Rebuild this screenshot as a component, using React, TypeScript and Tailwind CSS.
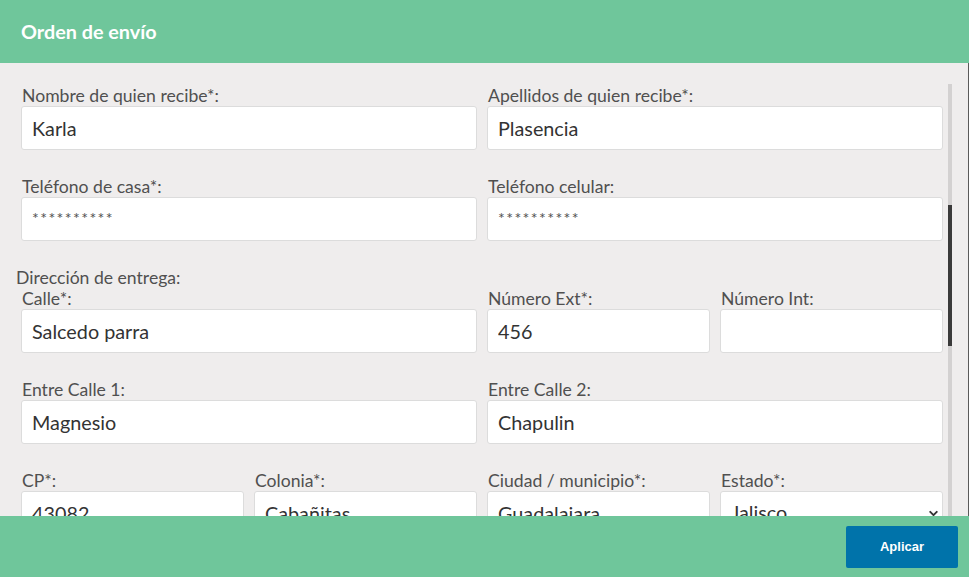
import { ChevronDown } from 'lucide-react';

interface FieldProps {
  label: string;
  value?: string;
  masked?: boolean;
  select?: boolean;
}

function Field({ label, value = '', masked, select }: FieldProps) {
  return (
    <div className="mb-[27px] min-w-0">
      <div className="h-[20px] pl-[1px] text-[17.6px] leading-[20px] text-[#505050] whitespace-nowrap">{label}</div>
      {select ? (
        <div className="flex h-[44px] items-center justify-between rounded-[3px] border border-[#dcdcdc] bg-white pl-[10px] pr-[2px] text-[19.8px] text-[#333]">
          <span>{value}</span>
          <ChevronDown className="h-[13px] w-[13px] text-[#333]" strokeWidth={3.5} />
        </div>
      ) : (
        <input
          readOnly
          defaultValue={value}
          className={
            'block h-[44px] w-full rounded-[3px] border border-[#dcdcdc] bg-white px-[10px] outline-none ' +
            (masked ? 'pb-[4px] text-[16px] tracking-[1.4px] text-[#505050]' : 'text-[19.8px] text-[#333]')
          }
        />
      )}
    </div>
  );
}

export default function App() {
  return (
    <div className="flex h-[577px] w-full flex-col overflow-hidden bg-[#efeded] font-['Lato',sans-serif]">
      {/* Header */}
      <div className="flex h-[63px] shrink-0 items-center bg-[#6fc69b] px-[21px]">
        <h1 className="text-[19.8px] font-bold text-white">Orden de envío</h1>
      </div>

      {/* Body */}
      <div className="flex min-h-0 flex-1 overflow-hidden border-r border-[#5a5a5a]">
        <div className="w-[943px] shrink-0 pl-[21px] pt-[23px]">
          <div className="grid grid-cols-2 gap-x-[10px]">
            <Field label="Nombre de quien recibe*:" value="Karla" />
            <Field label="Apellidos de quien recibe*:" value="Plasencia" />
            <Field label="Teléfono de casa*:" value="**********" masked />
            <Field label="Teléfono celular:" value="**********" masked />
          </div>
          <div className="-ml-[5px] h-[21px] text-[17.6px] leading-[20px] text-[#505050]">Dirección de entrega:</div>
          <div className="grid grid-cols-2 gap-x-[10px]">
            <Field label="Calle*:" value="Salcedo parra" />
            <div className="grid grid-cols-2 gap-x-[10px]">
              <Field label="Número Ext*:" value="456" />
              <Field label="Número Int:" />
            </div>
            <Field label="Entre Calle 1:" value="Magnesio" />
            <Field label="Entre Calle 2:" value="Chapulin" />
            <div className="grid grid-cols-2 gap-x-[10px]">
              <Field label="CP*:" value="43082" />
              <Field label="Colonia*:" value="Cabañitas" />
            </div>
            <div className="grid grid-cols-2 gap-x-[10px]">
              <Field label="Ciudad / municipio*:" value="Guadalajara" />
              <Field label="Estado*:" value="Jalisco" select />
            </div>
          </div>
        </div>

        {/* Scrollbar */}
        <div className="ml-[5px] mt-[21px] w-[4px] shrink-0 bg-[#d3d1d1]">
          <div className="mt-[121px] h-[141px] w-full bg-[#3a3a3a]" />
        </div>
      </div>

      {/* Footer */}
      <div className="flex h-[61px] shrink-0 items-center justify-end bg-[#6fc69b] pr-[11px]">
        <button className="h-[42px] w-[112px] rounded-[2px] bg-[#0073aa] font-['Liberation_Sans',Arial,sans-serif] text-[13px] font-bold text-white">
          Aplicar
        </button>
      </div>
    </div>
  );
}
